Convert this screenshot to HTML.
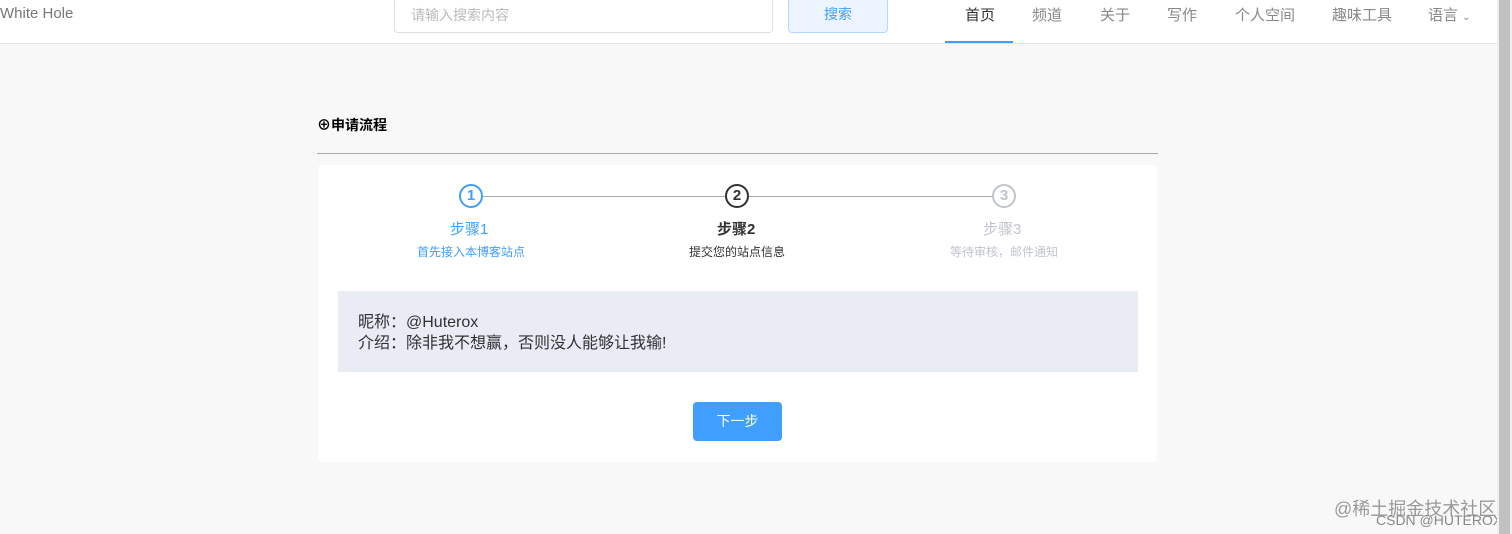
<!DOCTYPE html><html><head><meta charset="utf-8"><style>
*{margin:0;padding:0;box-sizing:border-box}
body{width:1512px;height:534px;background:#f8f8f8;font-family:"Liberation Sans","Noto Sans CJK SC",sans-serif;position:relative;overflow:hidden}
.hdr{position:absolute;left:0;top:0;width:1497px;height:44px;background:#fff;border-bottom:1px solid #e4e4e4}
.a{position:absolute;white-space:nowrap}
.nav{font-size:15px;color:#888;top:4px}
.sb{position:absolute;right:0;top:0;width:15px;height:534px;background:#f0f0f0}
.sb div{position:absolute;left:2px;top:0;width:11px;height:534px;background:#c1c1c1}
.card{position:absolute;left:318px;top:165px;width:839px;height:297px;background:#fff;border-radius:4px}
.c{position:absolute;width:24px;height:24px;border-radius:50%;border:2px solid;font-size:15px;font-weight:bold;text-align:center;line-height:20px;top:184px}
</style></head><body>
<div class="hdr">
<div class="a" style="left:0;top:5px;font-size:15px;color:#777">White Hole</div>
<div class="a" style="left:394px;top:-2px;width:379px;height:35px;border:1px solid #dcdfe6;border-radius:4px;font-size:14px;color:#bbb;padding:6px 0 0 16px">请输入搜索内容</div>
<div class="a" style="left:788px;top:-2px;width:100px;height:35px;border:1px solid #b3d8ff;background:#ecf5ff;border-radius:4px;font-size:14px;color:#409eff;text-align:center;padding-top:5px">搜索</div>
<div class="a nav" style="left:965px;color:#303133">首页</div>
<div class="a" style="left:945px;top:41px;width:68px;height:2px;background:#409eff"></div>
<div class="a nav" style="left:1032px">频道</div>
<div class="a nav" style="left:1100px">关于</div>
<div class="a nav" style="left:1167px">写作</div>
<div class="a nav" style="left:1235px">个人空间</div>
<div class="a nav" style="left:1332px">趣味工具</div>
<div class="a nav" style="left:1428px">语言 <span style="font-size:10px">⌄</span></div>
</div>
<div class="a" style="left:317px;top:115px;font-size:14px;font-weight:bold;color:#000">⊕申请流程</div>
<div class="a" style="left:317px;top:153px;width:841px;height:1px;background:#aaa"></div>
<div class="card"></div>
<div class="a" style="left:483px;top:196px;width:242px;height:1px;background:#aaa"></div>
<div class="a" style="left:749px;top:196px;width:244px;height:1px;background:#aaa"></div>
<div class="c" style="left:459px;color:#409eff;border-color:#409eff">1</div>
<div class="c" style="left:725px;color:#303133;border-color:#303133">2</div>
<div class="c" style="left:992px;color:#c0c4cc;border-color:#c0c4cc">3</div>
<div class="a" style="left:450px;top:218px;font-size:15px;color:#409eff">步骤1</div>
<div class="a" style="left:717px;top:218px;font-size:15px;font-weight:bold;color:#303133">步骤2</div>
<div class="a" style="left:983px;top:218px;font-size:15px;color:#c0c4cc">步骤3</div>
<div class="a" style="left:417px;top:243px;font-size:12px;color:#409eff">首先接入本博客站点</div>
<div class="a" style="left:689px;top:243px;font-size:12px;color:#303133">提交您的站点信息</div>
<div class="a" style="left:950px;top:243px;font-size:12px;color:#c0c4cc">等待审核，邮件通知</div>
<div class="a" style="left:338px;top:291px;width:800px;height:81px;background:#e9ecf4"></div>
<div class="a" style="left:358px;top:312px;font-size:16px;color:#303133;line-height:21px">昵称：@Huterox<br>介绍：除非我不想赢，否则没人能够让我输!</div>
<div class="a" style="left:693px;top:402px;width:89px;height:39px;background:#409eff;border-radius:4px;color:#fff;font-size:14px;text-align:center;line-height:39px">下一步</div>
<div class="a" style="left:1334px;top:495px;font-size:18px;color:#999">@稀土掘金技术社区</div>
<div class="a" style="left:1376px;top:512px;font-size:14px;color:#888">CSDN @HUTEROX</div>
<div class="sb"><div></div></div>
</body></html>
